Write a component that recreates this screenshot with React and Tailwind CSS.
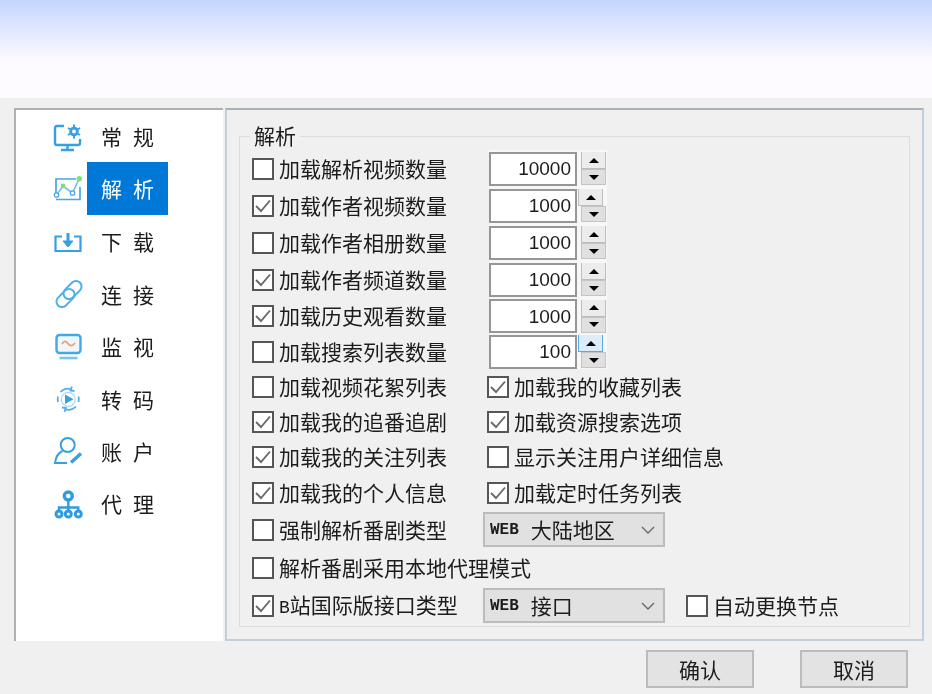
import React from "react";

const cjk = "font-['Noto_Sans_CJK_SC','Liberation_Sans',sans-serif]";

const Check = ({ checked }) => (
  <span className="flex h-[22px] w-[22px] shrink-0 items-center justify-center border-2 border-[#565656] bg-white">
    {checked && (
      <svg viewBox="0 0 18 18" className="h-[18px] w-[18px]">
        <path d="M2 9 L7 14 L16 3.5" fill="none" stroke="#6a6a6a" strokeWidth="1.9" />
      </svg>
    )}
  </span>
);

const Opt = ({ label, checked }) => (
  <div className="flex items-center gap-[5px]">
    <Check checked={checked} />
    <span className="whitespace-nowrap pb-[1px] text-[21px] leading-none text-[#1c1c1c]">{label}</span>
  </div>
);

const Spin = ({ value, active, shifted }) => (
  <div className="ml-[2px] flex h-full items-center bg-[#f7f7f7]">
    <div className="flex h-[34px] w-[88px] items-center justify-end border-2 border-[#969696] bg-white pr-[4px] pt-[2px] font-['Liberation_Sans',sans-serif] text-[19px] text-[#1c1c1c]">
      {value}
    </div>
    <div className="ml-[3px] flex w-[27px] flex-col">
      <div
        className={`flex h-[17px] w-[25px] items-center justify-center ${
          active
            ? "-ml-[2px] border border-t-0 border-[#5aa9e6] bg-[#dcecf9]"
            : shifted
              ? "-ml-[2px] border-x border-b border-[#bdbdbd] bg-[#ececec]"
              : "ml-px border-x border-b border-[#bdbdbd] bg-[#ececec]"
        }`}
      >
        <span className="h-0 w-0 border-x-[5px] border-b-[5px] border-x-transparent border-b-black" />
      </div>
      <div className="ml-px flex h-[16px] w-[25px] items-center justify-center border border-[#c4c4c4] bg-[#e0e0e0]">
        <span className="h-0 w-0 border-x-[5px] border-t-[5px] border-x-transparent border-t-black" />
      </div>
    </div>
  </div>
);

const Combo = ({ label }) => (
  <div className="-mt-[1px] flex h-[35px] w-[182px] items-center justify-between border-2 border-[#bcbcbc] bg-[#e1e1e1] pl-[5px] pr-[8px]">
    <span className="flex items-center gap-[12px] text-[21px] leading-none text-[#1c1c1c]">
      <span className="font-['Liberation_Mono',monospace] text-[16px] font-bold">WEB</span>
      <span>{label}</span>
    </span>
    <svg viewBox="0 0 14 8" className="h-[8px] w-[14px]">
      <path d="M1 1 L7 7 L13 1" fill="none" stroke="#666" strokeWidth="1.3" />
    </svg>
  </div>
);

const IconGeneral = () => (
  <svg viewBox="0 0 30 30" className="h-[30px] w-[30px]" fill="none" stroke="#35a0e2" strokeWidth="2.4">
    <path d="M11 4 H4 Q2 4 2 6 V21 Q2 23 4 23 H25 Q27 23 27 21 V17" />
    <path d="M14.5 23 V28 M8 28 H21" />
    <circle cx="21" cy="9.5" r="3.4" strokeWidth="2.8" />
    <path d="M21 2.5 V5 M21 14 V16.5 M15 6 L17 7.2 M27 6 L25 7.2 M15 13 L17 11.8 M27 13 L25 11.8" strokeWidth="2" />
  </svg>
);

const IconParse = () => (
  <svg viewBox="0 0 30 30" className="h-[30px] w-[30px]" fill="none">
    <path d="M23 5 H3 V19 M3 25.5 H27 V13" stroke="#45a8e6" strokeWidth="1.7" />
    <path d="M3.5 21 L10 12 L19.5 19 L26 5" stroke="#6cc0ea" strokeWidth="1.6" />
    <circle cx="3.5" cy="21" r="2.2" fill="#fff" stroke="#45a8e6" strokeWidth="1.3" />
    <circle cx="10" cy="12" r="2.4" fill="#7fe07a" />
    <circle cx="19.5" cy="19" r="2.2" fill="#fff" stroke="#45a8e6" strokeWidth="1.3" />
    <circle cx="26.3" cy="4.7" r="2.7" fill="#7fe07a" />
  </svg>
);

const IconDownload = () => (
  <svg viewBox="0 0 30 30" className="h-[30px] w-[30px]" fill="none" stroke="#35a0e2" strokeWidth="2.2">
    <path d="M9 9.5 H2.5 V24 H27.5 V9.5 H21" />
    <path d="M15 6 V15" strokeWidth="3" />
    <path d="M10 14 L15 20 L20 14 Z" fill="#35a0e2" strokeWidth="1" />
  </svg>
);

const IconLink = () => (
  <svg viewBox="0 0 30 30" className="h-[30px] w-[30px]" fill="none" stroke="#4fb0ea" strokeWidth="2">
    <rect x="2" y="13.5" width="21" height="11" rx="5.5" transform="rotate(-45 12.5 19)" />
    <rect x="9" y="5.5" width="21" height="11" rx="5.5" transform="rotate(-45 19.5 11)" />
  </svg>
);

const IconMonitor = () => (
  <svg viewBox="0 0 30 30" className="h-[30px] w-[30px]" fill="none">
    <rect x="3.5" y="3" width="24" height="18" rx="3" fill="#eef7fd" stroke="#45a8e6" strokeWidth="2.4" />
    <path d="M9 12 Q12 7 15 11.5 T22 11" stroke="#f0a060" strokeWidth="1.8" />
    <path d="M6.5 26 H24.5" stroke="#7cc3ee" strokeWidth="2.6" />
  </svg>
);

const IconConvert = () => (
  <svg viewBox="0 0 30 30" className="h-[30px] w-[30px]" fill="none" stroke="#55b0e8" strokeWidth="1.8">
    <path d="M7.5 8 A10.5 10.5 0 0 1 19 5.5 M23 22.5 A10.5 10.5 0 0 1 11.5 25 M5 18 A10.5 10.5 0 0 1 5 12.5 M25.5 12.5 A10.5 10.5 0 0 1 25.5 18" />
    <path d="M19 2.5 L17.5 6.5 L21.5 7 M11.5 28 L13 24 L9 23.5" />
    <circle cx="15.3" cy="15.3" r="7" stroke="#a8d8f4" strokeWidth="1.2" />
    <path d="M12 10.5 L20.5 15.3 L12 20 Z" fill="#35a0e2" stroke="none" />
  </svg>
);

const IconAccount = () => (
  <svg viewBox="0 0 30 30" className="h-[30px] w-[30px]" fill="none" stroke="#35a0e2" strokeWidth="2">
    <circle cx="14.7" cy="9" r="7" />
    <path d="M9.5 15 Q3 18 2 27 H14" />
    <path d="M18 26.5 L28 17.5" strokeWidth="3.4" />
  </svg>
);

const IconProxy = () => (
  <svg viewBox="0 0 30 30" className="h-[30px] w-[30px]" fill="none" stroke="#2f9be0" strokeWidth="2.4">
    <circle cx="15.3" cy="7" r="4" strokeWidth="3.4" />
    <path d="M15.3 11 V22 M6 22 V18.5 H25.3 V22" />
    <circle cx="6" cy="25" r="3" strokeWidth="3" />
    <circle cx="15.3" cy="25" r="3" strokeWidth="3" />
    <circle cx="25.3" cy="25" r="3" strokeWidth="3" />
  </svg>
);

const NavItem = ({ icon: Icon, a, b, selected, h }) => (
  <div className={`flex items-center ${h}`}>
    <div className="flex w-[71px] justify-end pr-[4px]">
      <Icon />
    </div>
    <div
      className={`flex h-[53px] w-[81px] items-center gap-[11px] pl-[14px] text-[21px] leading-none ${
        selected ? "bg-[#0078d7] text-white" : "text-[#1c1c1c]"
      }`}
    >
      <span>{a}</span>
      <span>{b}</span>
    </div>
  </div>
);

const navItems = [
  { icon: IconGeneral, a: "常", b: "规", h: "h-[51px]" },
  { icon: IconParse, a: "解", b: "析", selected: true, h: "h-[53px]" },
  { icon: IconDownload, a: "下", b: "载", h: "h-[53px]" },
  { icon: IconLink, a: "连", b: "接", h: "h-[52px]" },
  { icon: IconMonitor, a: "监", b: "视", h: "h-[53px]" },
  { icon: IconConvert, a: "转", b: "码", h: "h-[52px]" },
  { icon: IconAccount, a: "账", b: "户", h: "h-[52px]" },
  { icon: IconProxy, a: "代", b: "理", h: "h-[53px]" },
];

const Row = ({ h, children }) => <div className={`flex items-center ${h}`}>{children}</div>;

const Left = ({ children }) => <div className="w-[235px] shrink-0">{children}</div>;

const ComboLeft = ({ children }) => <div className="w-[231px] shrink-0">{children}</div>;

const bLabel = (
  <>
    <span className="font-['Liberation_Mono',monospace] text-[18px]">B</span>站国际版接口类型
  </>
);

export default function App() {
  return (
    <div className={`flex h-[694px] w-[932px] flex-col overflow-hidden bg-[#f0f0f0] blur-[0.6px] ${cjk}`}>
      <div className="h-[98px] shrink-0 bg-gradient-to-b from-[#c5d4ff] to-[#fdfbff] to-[62%]" />

      <div className="flex h-[533px] shrink-0 gap-[2px] pl-[14px] pt-[10px]">
        <div className="h-[533px] w-[209px] border-l-2 border-t-2 border-[#b0b0b0] bg-white pt-[1px]">
          {navItems.map((item) => (
            <NavItem key={item.a} {...item} />
          ))}
        </div>

        <div className="h-[533px] w-[699px] border-2 border-[#c0cfdc] border-t-[#a8b0b8] pl-[12px] pt-[26px]">
          <div className="relative h-[491px] w-[671px] border border-[#dcdcdc] pl-[12px]">
            <span className="absolute left-[10px] top-[-15px] bg-[#f0f0f0] px-[4px] text-[21px] leading-[26px] text-[#1c1c1c]">
              解析
            </span>
            <div className="pt-[13px]">
              <Row h="h-[37px]"><Left><Opt label="加载解析视频数量" /></Left><Spin value="10000" /></Row>
              <Row h="h-[37px]"><Left><Opt label="加载作者视频数量" checked /></Left><Spin value="1000" shifted /></Row>
              <Row h="h-[37px]"><Left><Opt label="加载作者相册数量" /></Left><Spin value="1000" /></Row>
              <Row h="h-[37px]"><Left><Opt label="加载作者频道数量" checked /></Left><Spin value="1000" /></Row>
              <Row h="h-[36px]"><Left><Opt label="加载历史观看数量" checked /></Left><Spin value="1000" /></Row>
              <Row h="h-[35px]"><Left><Opt label="加载搜索列表数量" /></Left><Spin value="100" active /></Row>
              <Row h="h-[35px]"><Left><Opt label="加载视频花絮列表" /></Left><Opt label="加载我的收藏列表" checked /></Row>
              <Row h="h-[35px]"><Left><Opt label="加载我的追番追剧" checked /></Left><Opt label="加载资源搜索选项" checked /></Row>
              <Row h="h-[36px]"><Left><Opt label="加载我的关注列表" checked /></Left><Opt label="显示关注用户详细信息" /></Row>
              <Row h="h-[36px]"><Left><Opt label="加载我的个人信息" checked /></Left><Opt label="加载定时任务列表" checked /></Row>
              <Row h="h-[38px]"><ComboLeft><Opt label="强制解析番剧类型" /></ComboLeft><Combo label="大陆地区" /></Row>
              <Row h="h-[38px]"><Opt label="解析番剧采用本地代理模式" /></Row>
              <Row h="h-[38px]">
                <ComboLeft><Opt label={bLabel} checked /></ComboLeft>
                <Combo label="接口" />
                <div className="ml-[21px]"><Opt label="自动更换节点" /></div>
              </Row>
            </div>
          </div>
        </div>
      </div>

      <div className="flex flex-1 items-start justify-end gap-[46px] pr-[24px] pt-[19px]">
        {["确认", "取消"].map((t) => (
          <button
            key={t}
            className="flex h-[38px] w-[108px] items-center justify-center border-2 border-[#bcbcbc] bg-[#e3e3e3] text-[21px] leading-none text-[#1c1c1c]"
          >
            {t}
          </button>
        ))}
      </div>
    </div>
  );
}
